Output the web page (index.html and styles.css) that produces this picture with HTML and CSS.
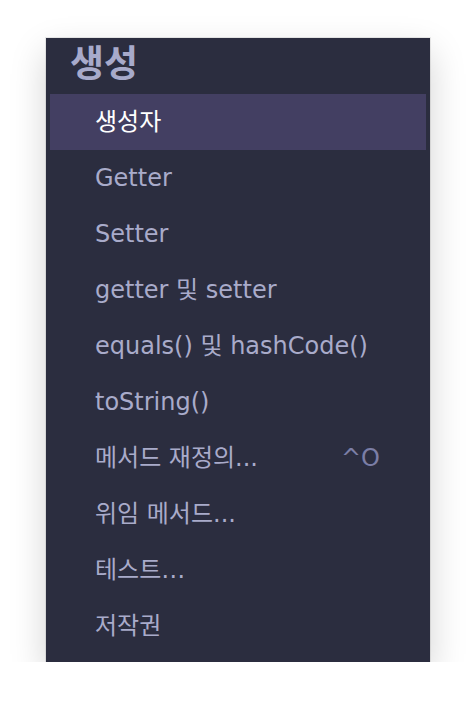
FILE: index.html
```html
<!DOCTYPE html>
<html lang="ko">
<head>
<meta charset="utf-8">
<link rel="stylesheet" href="styles.css">
</head>
<body>
<div class="menu">
  <div class="menu-title">생성</div>
  <ul class="menu-list">
    <li class="menu-item active">생성자</li>
    <li class="menu-item">Getter</li>
    <li class="menu-item">Setter</li>
    <li class="menu-item">getter 및 setter</li>
    <li class="menu-item">equals() 및 hashCode()</li>
    <li class="menu-item">toString()</li>
    <li class="menu-item"><span>메서드 재정의...</span><span class="shortcut">^O</span></li>
    <li class="menu-item">위임 메서드...</li>
    <li class="menu-item">테스트…</li>
    <li class="menu-item">저작권</li>
  </ul>
</div>
</body>
</html>
```
FILE: styles.css
```css
html, body {
  margin: 0;
  padding: 0;
  background: #ffffff;
}
body {
  font-family: "DejaVu Sans", "Noto Sans CJK KR", sans-serif;
}
.menu {
  margin: 38px 0 0 46px;
  width: 384px;
  height: 624px;
  background: #2b2d3f;
  box-shadow: 0 0 0 1px rgba(0, 0, 0, 0.08), 0 14px 34px rgba(0, 0, 0, 0.18);
  box-sizing: border-box;
}
.menu-title {
  height: 56px;
  padding: 0 0 2px 24px;
  box-sizing: border-box;
  display: flex;
  align-items: center;
  font-size: 37px;
  line-height: 40px;
  font-weight: 700;
  color: #a7aacb;
}
.menu-list {
  list-style: none;
  margin: 0;
  padding: 0 4px;
}
.menu-item {
  height: 56px;
  padding: 0 46px 0 45px;
  box-sizing: border-box;
  display: flex;
  align-items: center;
  justify-content: space-between;
  font-size: 24px;
  line-height: 28px;
  color: #a9abca;
}
.menu-item.active {
  background: #433f62;
  color: #ffffff;
}
.shortcut {
  color: #7b7ea6;
}
```
